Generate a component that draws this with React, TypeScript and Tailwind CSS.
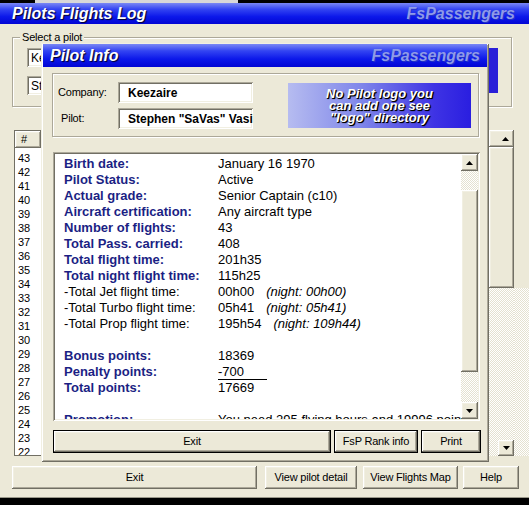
import React from "react";

const raised =
  "shadow-[inset_-1px_-1px_0_#716f64,inset_1px_1px_0_#ffffff,inset_-2px_-2px_0_#aca899,inset_2px_2px_0_#f1efe2]";
const sunken =
  "shadow-[inset_1px_1px_0_#aca899,inset_-1px_-1px_0_#ffffff,inset_2px_2px_0_#716f64,inset_-2px_-2px_0_#f1efe2]";
const hatch =
  "bg-[image:repeating-conic-gradient(#ffffff_0_25%,#e4e1d0_0_50%)] bg-[length:2px_2px]";
const titleBg =
  "bg-[image:linear-gradient(to_bottom,#7a88f4_0%,#3344f2_30%,#0c18ea_65%,#0206d4_100%)]";

function Arrow({ dir }: { dir: "up" | "down" }) {
  return (
    <svg width="7" height="4" viewBox="0 0 7 4">
      <polygon points={dir === "up" ? "3.5,0 7,4 0,4" : "0,0 7,0 3.5,4"} fill="#000" />
    </svg>
  );
}

function TitleBar({ title, className }: { title: string; className: string }) {
  return (
    <div className={`${titleBg} flex items-center justify-between shrink-0 ${className}`}>
      <span className="text-white font-bold italic text-[16px] leading-none [text-shadow:1px_1px_1px_#000028]">
        {title}
      </span>
      <span className="text-[#8e9ae8] font-bold italic text-[16px] leading-none [text-shadow:1px_1px_0_#2232c8]">
        FsPassengers
      </span>
    </div>
  );
}

function Btn({ children, className }: { children: React.ReactNode; className: string }) {
  return (
    <div
      className={`${raised} bg-[#ece9d8] flex items-center justify-center text-[11px] tracking-[-0.2px] text-black ${className}`}
    >
      {children}
    </div>
  );
}

function DlgBtn({ children, className }: { children: React.ReactNode; className: string }) {
  return (
    <div className={`border border-black flex ${className}`}>
      <div
        className={`${raised} bg-[#ece9d8] flex-1 flex items-center justify-center text-[11px] tracking-[-0.2px] text-black`}
      >
        {children}
      </div>
    </div>
  );
}

type Row = { l?: string; v?: string; n?: string; b?: boolean; u?: boolean };

const rows: Row[] = [
  { l: "Birth date:", v: "January 16 1970", b: true },
  { l: "Pilot Status:", v: "Active", b: true },
  { l: "Actual grade:", v: "Senior Captain (c10)", b: true },
  { l: "Aircraft certification:", v: "Any aircraft type", b: true },
  { l: "Number of flights:", v: "43", b: true },
  { l: "Total Pass. carried:", v: "408", b: true },
  { l: "Total flight time:", v: "201h35", b: true },
  { l: "Total night flight time:", v: "115h25", b: true },
  { l: "-Total Jet flight time:", v: "00h00", n: "(night: 00h00)" },
  { l: "-Total Turbo flight time:", v: "05h41", n: "(night: 05h41)" },
  { l: "-Total Prop flight time:", v: "195h54", n: "(night: 109h44)" },
  {},
  { l: "Bonus points:", v: "18369", b: true },
  { l: "Penalty points:", v: "-700", b: true, u: true },
  { l: "Total points:", v: "17669", b: true },
  {},
  { l: "Promotion:", v: "You need 295 flying hours and 19996 points", b: true },
];

const listNums = [43, 42, 41, 40, 39, 38, 37, 36, 35, 34, 33, 32, 31, 30, 29, 28, 27, 26, 25, 24, 23, 22];

function Combo({ text }: { text: string }) {
  return (
    <div className={`${sunken} bg-white w-[300px] h-[19px] flex items-center pl-[4px] text-[12px]`}>
      {text}
    </div>
  );
}

function TextBox({ text }: { text: string }) {
  return (
    <div
      className={`${sunken} bg-white w-[135px] h-[21px] flex items-center pl-[10px] text-[12px] font-bold overflow-hidden whitespace-nowrap`}
    >
      {text}
    </div>
  );
}

function PilotInfo() {
  return (
    <div
      className={`absolute left-[41px] top-[43px] w-[448px] h-[419px] bg-[#ece9d8] flex flex-col pt-[1px] px-[2px] shadow-[inset_1px_1px_0_#f1efe2,inset_-1px_-1px_0_#716f64,inset_2px_2px_0_#ffffff,inset_-2px_-2px_0_#aca899]`}
    >
      <TitleBar title="Pilot Info" className="h-[23px] pl-[7px] pr-[7px]" />
      {/* header frame */}
      <div className="mt-[6px] ml-[9px] w-[427px] h-[64px] border border-[#aca899] shadow-[inset_1px_1px_0_#ffffff,1px_1px_0_#ffffff] flex justify-between pt-[8px] pl-[5px] pr-[7px]">
        <div className="flex flex-col gap-[5px]">
          <div className="flex items-center">
            <span className="w-[60px] text-[11px] tracking-[-0.2px]">Company:</span>
            <TextBox text="Keezaire" />
          </div>
          <div className="flex items-center">
            <span className="w-[60px] pl-[3px] text-[11px] tracking-[-0.2px]">Pilot:</span>
            <TextBox text={'Stephen "SaVas" Vasilakis'} />
          </div>
        </div>
        <div className="mt-[1px] w-[183px] h-[45px] bg-[image:linear-gradient(to_right,#b6bcf0_0%,#7f86ea_40%,#3e33e4_80%,#2a1ee0_100%)] flex flex-col items-center justify-center text-white font-bold italic text-[13px] leading-[12px] [text-shadow:1px_1px_0_#000,1px_1px_1px_#000]">
          <span>No Pilot logo you</span>
          <span>can add one see</span>
          <span>"logo" directory</span>
        </div>
      </div>
      {/* text area */}
      <div className={`${sunken} mt-[15px] ml-[10px] w-[427px] h-[269px] bg-white p-[2px] flex`}>
        <div className="flex-1 overflow-hidden pl-[9px] pt-[2px]">
          <div className="grid grid-cols-[154px_1fr] text-[13px] leading-[16px] whitespace-nowrap">
            {rows.map((r, i) =>
              r.l ? (
                <React.Fragment key={i}>
                  <span className={r.b ? "font-bold text-[#1b1f84]" : "text-black"}>{r.l}</span>
                  <span className="text-black">
                    {r.u ? (
                      <span className="inline-block w-[49px] border-b border-black leading-[14px]">{r.v}</span>
                    ) : (
                      r.v
                    )}
                    {r.n && <span className="italic ml-[12px]">{r.n}</span>}
                  </span>
                </React.Fragment>
              ) : (
                <div key={i} className="col-span-2 h-[16px]" />
              )
            )}
          </div>
        </div>
        <div className="w-[17px] flex flex-col">
          <div className={`${raised} bg-[#ece9d8] h-[17px] flex items-center justify-center`}>
            <Arrow dir="up" />
          </div>
          <div className={`${hatch} h-[19px]`} />
          <div className={`${raised} bg-[#ece9d8] h-[182px]`} />
          <div className={`${hatch} h-[30px]`} />
          <div className={`${raised} bg-[#ece9d8] h-[17px] flex items-center justify-center`}>
            <Arrow dir="down" />
          </div>
        </div>
      </div>
      {/* buttons */}
      <div className="mt-[9px] ml-[10px] flex h-[23px]">
        <DlgBtn className="w-[278px]">Exit</DlgBtn>
        <DlgBtn className="ml-[3px] w-[84px]">FsP Rank info</DlgBtn>
        <DlgBtn className="ml-[3px] w-[60px]">Print</DlgBtn>
      </div>
    </div>
  );
}

export default function App() {
  return (
    <div className="relative w-[529px] h-[505px] overflow-hidden bg-[#ece9d8] font-['Liberation_Sans',Arial,sans-serif] text-black flex flex-col">
      <div className="h-[3px] shrink-0 bg-black flex">
        <div className="ml-[35px] w-[203px] bg-[#d8d8d8]" />
      </div>
      <TitleBar title="Pilots Flights Log" className="h-[21px] pl-[12px] pr-[14px]" />

      {/* Select a pilot */}
      <div className="relative mt-[13px] ml-[12px] w-[500px] h-[70px] shrink-0 border border-[#aca899] shadow-[inset_1px_1px_0_#ffffff,1px_1px_0_#ffffff]">
        <span className="absolute -top-[8px] left-[7px] px-[2px] bg-[#ece9d8] text-[11px] leading-[14px] tracking-[-0.2px]">
          Select a pilot
        </span>
        <div className="flex justify-between pt-[10px] pl-[14px] pr-[13px]">
          <div className="flex flex-col gap-[9px]">
            <Combo text="Keezaire" />
            <Combo text={'Stephen "SaVas" Vasilakis'} />
          </div>
          <div className="w-[80px] h-[45px] bg-[#2a1fd8]" />
        </div>
      </div>

      {/* flights list */}
      <div className="mt-[23px] ml-[14px] h-[326px] shrink-0 flex">
        <div className="w-[475px] bg-white border border-[#716f64] flex flex-col overflow-hidden">
          <div className={`${raised} bg-[#ece9d8] w-[26px] h-[17px] shrink-0 text-[11px] leading-[17px] pl-[6px]`}>#</div>
          <div className="pt-[3px] pl-[3px] text-[11px]">
            {listNums.map((n) => (
              <div key={n} className="h-[14px] leading-[14px]">
                {n}
              </div>
            ))}
          </div>
        </div>
        <div className="w-[25px] flex flex-col">
          <div className={`${raised} bg-[#ece9d8] h-[17px] flex items-center justify-end pr-[5px]`}>
            <Arrow dir="up" />
          </div>
          <div className={`${raised} bg-[#ece9d8] h-[141px]`} />
          <div className={`${hatch} flex-1`} />
          <div className="h-[16px] flex">
            <div className={`${hatch} w-[9px]`} />
            <div className={`${raised} bg-[#ece9d8] flex-1 flex items-center justify-center`}>
              <Arrow dir="down" />
            </div>
          </div>
        </div>
        <div className="w-[15px] flex flex-col">
          <div className="h-[158px]" />
          <div className={`${hatch} flex-1`} />
        </div>
      </div>

      {/* bottom buttons */}
      <div className="mt-[10px] flex h-[23px] shrink-0">
        <Btn className="ml-[12px] w-[245px]">Exit</Btn>
        <Btn className="ml-[8px] w-[92px]">View pilot detail</Btn>
        <Btn className="ml-[6px] w-[95px]">View Flights Map</Btn>
        <Btn className="ml-[5px] w-[56px]">Help</Btn>
      </div>

      <div className="mt-auto h-[8px] shrink-0 border-t border-[#9a988a] bg-black" />

      <PilotInfo />
    </div>
  );
}
